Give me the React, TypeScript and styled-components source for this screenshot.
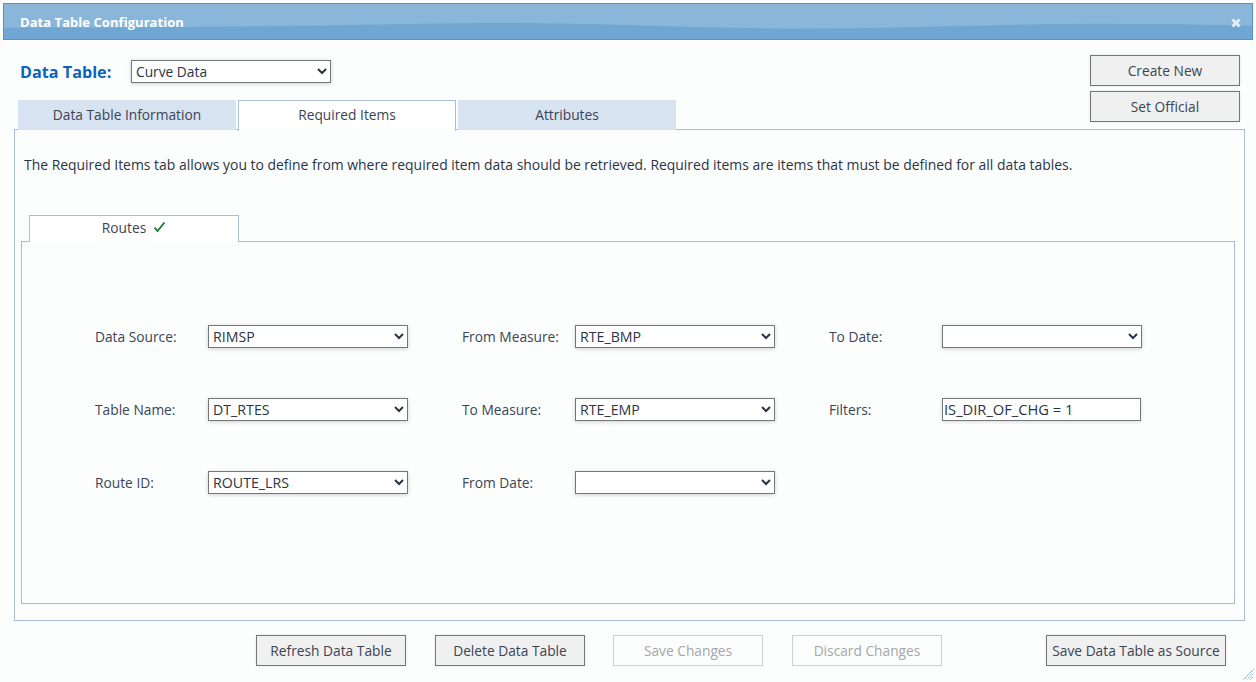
import styled, { createGlobalStyle } from 'styled-components';

const GlobalStyle = createGlobalStyle`
  html, body {
    margin: 0;
    padding: 0;
    background: #fff;
  }
  body {
    font-family: "Open Sans", "Noto Sans", sans-serif;
    font-size: 13.75px;
    color: #2a3444;
  }
`;

const Dialog = styled.div`
  width: 1256px;
  height: 682px;
  padding: 3px 3px 0;
  box-sizing: border-box;
  position: relative;
  overflow: hidden;
  background: #fcfefe;
`;

const TitleBar = styled.div`
  height: 37px;
  box-sizing: border-box;
  border: 1px solid #4f93cb;
  background: #6fa6d2;
  display: flex;
  align-items: center;
  justify-content: space-between;
  padding: 0 11px 0 16px;
  position: relative;
  overflow: hidden;
`;

const TitleWave = styled.svg`
  position: absolute;
  left: 0;
  top: 0;
  width: 100%;
  height: 100%;
`;

const TitleText = styled.span`
  position: relative;
  font-size: 13px;
  font-weight: 700;
  color: #fff;
  letter-spacing: 0.05px;
  margin-top: 1px;
`;

const CloseIcon = styled.svg`
  position: relative;
  width: 10px;
  height: 10px;
  margin-top: 2px;
`;

const Top = styled.div`
  display: flex;
  justify-content: space-between;
  padding: 15px 13px 0 11px;
`;

const TopLeft = styled.div`
  display: flex;
  flex-direction: column;
`;

const TableRow = styled.div`
  display: flex;
  align-items: center;
  padding: 5px 0 0 6px;
  height: 23px;
  margin-bottom: 17px;
`;

const TableLabel = styled.label`
  font-size: 16.2px;
  font-weight: 700;
  color: #0d62bd;
  width: 111px;
`;

const Select = styled.select<{ $width?: number }>`
  appearance: auto;
  width: ${({ $width }) => $width ?? 200}px;
  height: 23px;
  box-sizing: border-box;
  border: 1px solid #767676;
  border-radius: 0;
  background: #fff;
  color: #2a3444;
  font-family: inherit;
  font-size: 13.75px;
  padding: 0;
  box-shadow: 0 1px 4px rgba(0, 0, 0, 0.18);
`;

const TabStrip = styled.div`
  display: flex;
  gap: 2px;
  padding-left: 4px;
  height: 30px;
  position: relative;
  z-index: 1;
`;

const Tab = styled.div<{ $active?: boolean }>`
  width: 218px;
  height: ${({ $active }) => ($active ? 31 : 30)}px;
  box-sizing: border-box;
  display: flex;
  align-items: center;
  justify-content: center;
  padding-bottom: ${({ $active }) => ($active ? 3 : 1)}px;
  background: ${({ $active }) => ($active ? '#fff' : '#d8e3f1')};
  border: ${({ $active }) => ($active ? '1px solid #a9bdd3' : 'none')};
  border-bottom: none;
  color: #3a4454;
`;

const TopButtons = styled.div`
  display: flex;
  flex-direction: column;
  gap: 5px;
`;

const Button = styled.button<{ $width?: number }>`
  width: ${({ $width }) => $width ?? 150}px;
  height: 31px;
  box-sizing: border-box;
  border: 1px solid #767676;
  background: #f0f0f0;
  color: #3a4454;
  font-family: inherit;
  font-size: 13.75px;
  padding: 0 0 1px;
  box-shadow: 0 0 2px rgba(0, 0, 0, 0.12);

  &:disabled {
    border-color: #cfcfcf;
    background: #fcfefe;
    color: #a6a6a6;
    box-shadow: none;
  }
`;

const Panel = styled.div`
  margin: -1px 8px 0 11px;
  height: 492px;
  box-sizing: border-box;
  border: 1px solid #a9bdd3;
  padding: 0 9px 16px 6px;
  display: flex;
  flex-direction: column;
`;

const Intro = styled.p`
  margin: 26px 0 0 3px;
  height: 59px;
  font-size: 13.93px;
  line-height: 18px;
  color: #2a3444;
  white-space: nowrap;
`;

const SubTab = styled.div`
  width: 210px;
  height: 27px;
  margin-left: 8px;
  box-sizing: border-box;
  background: #fff;
  border: 1px solid #a9bdd3;
  border-bottom: none;
  display: flex;
  align-items: center;
  justify-content: center;
  gap: 7px;
  color: #3a4454;
  position: relative;
  z-index: 1;
  margin-bottom: -1px;
  padding-bottom: 3px;
`;

const CheckIcon = styled.svg`
  width: 13px;
  height: 12px;
  margin-top: -1px;
`;

const SubPanel = styled.div`
  flex: 1;
  border: 1px solid #a9bdd3;
  padding: 83px 0 0 72px;
`;

const FormGrid = styled.div`
  display: grid;
  grid-template-columns: 114px 200px 53px 114px 200px 53px 114px 200px;
  grid-auto-rows: 23px;
  row-gap: 50px;
  align-items: center;
`;

const FieldLabel = styled.label<{ $col: number }>`
  grid-column: ${({ $col }) => $col};
  padding-left: 1px;
  color: #3a4454;
`;

const FieldSelect = styled(Select)<{ $col: number }>`
  grid-column: ${({ $col }) => $col};
  font-size: 14.2px;
`;

const TextInput = styled.input`
  grid-column: 8;
  width: 199px;
  height: 23px;
  box-sizing: border-box;
  border: 1px solid #767676;
  background: #fff;
  color: #2a3444;
  font-family: inherit;
  font-size: 14.7px;
  padding: 0 1px 2px;
  box-shadow: 0 1px 4px rgba(0, 0, 0, 0.14);
`;

const Footer = styled.div`
  display: flex;
  padding: 14px 0 0 253px;
`;

const FooterButton = styled(Button)<{ $gap: number }>`
  margin-right: ${({ $gap }) => $gap}px;
`;

const ResizeGrip = styled.svg`
  position: absolute;
  right: 2px;
  bottom: 2px;
  width: 11px;
  height: 11px;
`;

function App() {
  return (
    <Dialog>
      <GlobalStyle />
      <TitleBar>
        <TitleWave viewBox="0 0 1250 37" preserveAspectRatio="none">
          <path
            d="M0 0 H1250 V23 C1200 22 1150 21 1100 21 C1000 21 900 26 800 26 C700 26 600 20 500 20 C400 20 300 25 0 25 Z"
            fill="#8ab6da"
          />
        </TitleWave>
        <TitleText>Data Table Configuration</TitleText>
        <CloseIcon viewBox="0 0 10 10">
          <path d="M1.5 1.5 L8.5 8.5 M8.5 1.5 L1.5 8.5" stroke="#e4edf5" strokeWidth="3" />
        </CloseIcon>
      </TitleBar>
      <Top>
        <TopLeft>
          <TableRow>
            <TableLabel>Data Table:</TableLabel>
            <Select $width={200} defaultValue="Curve Data">
              <option>Curve Data</option>
            </Select>
          </TableRow>
          <TabStrip>
            <Tab>Data Table Information</Tab>
            <Tab $active>Required Items</Tab>
            <Tab>Attributes</Tab>
          </TabStrip>
        </TopLeft>
        <TopButtons>
          <Button>Create New</Button>
          <Button>Set Official</Button>
        </TopButtons>
      </Top>
      <Panel>
        <Intro>
          The Required Items tab allows you to define from where required item data should be retrieved. Required items are items that must be defined for all data tables.
        </Intro>
        <SubTab>
          Routes
          <CheckIcon viewBox="0 0 13 12">
            <path d="M1.5 6.5 L4.5 10 L11.5 1.5" fill="none" stroke="#1f7a35" strokeWidth="1.9" />
          </CheckIcon>
        </SubTab>
        <SubPanel>
          <FormGrid>
            <FieldLabel $col={1}>Data Source:</FieldLabel>
            <FieldSelect $col={2} defaultValue="RIMSP">
              <option>RIMSP</option>
            </FieldSelect>
            <FieldLabel $col={4}>From Measure:</FieldLabel>
            <FieldSelect $col={5} defaultValue="RTE_BMP">
              <option>RTE_BMP</option>
            </FieldSelect>
            <FieldLabel $col={7}>To Date:</FieldLabel>
            <FieldSelect $col={8}>
              <option></option>
            </FieldSelect>

            <FieldLabel $col={1}>Table Name:</FieldLabel>
            <FieldSelect $col={2} defaultValue="DT_RTES">
              <option>DT_RTES</option>
            </FieldSelect>
            <FieldLabel $col={4}>To Measure:</FieldLabel>
            <FieldSelect $col={5} defaultValue="RTE_EMP">
              <option>RTE_EMP</option>
            </FieldSelect>
            <FieldLabel $col={7}>Filters:</FieldLabel>
            <TextInput defaultValue="IS_DIR_OF_CHG = 1" />

            <FieldLabel $col={1}>Route ID:</FieldLabel>
            <FieldSelect $col={2} defaultValue="ROUTE_LRS">
              <option>ROUTE_LRS</option>
            </FieldSelect>
            <FieldLabel $col={4}>From Date:</FieldLabel>
            <FieldSelect $col={5}>
              <option></option>
            </FieldSelect>
          </FormGrid>
        </SubPanel>
      </Panel>
      <Footer>
        <FooterButton $gap={29}>Refresh Data Table</FooterButton>
        <FooterButton $gap={28}>Delete Data Table</FooterButton>
        <FooterButton $gap={29} disabled>Save Changes</FooterButton>
        <FooterButton $gap={104} disabled>Discard Changes</FooterButton>
        <FooterButton $gap={0} $width={180}>Save Data Table as Source</FooterButton>
      </Footer>
      <ResizeGrip viewBox="0 0 11 11">
        <path d="M0.5 10.5 L10.5 0.5 M4 10.5 L10.5 4 M7.5 10.5 L10.5 7.5" stroke="#4f93cb" strokeWidth="1" strokeDasharray="1.5 0.7" />
      </ResizeGrip>
    </Dialog>
  );
}

export default App;
